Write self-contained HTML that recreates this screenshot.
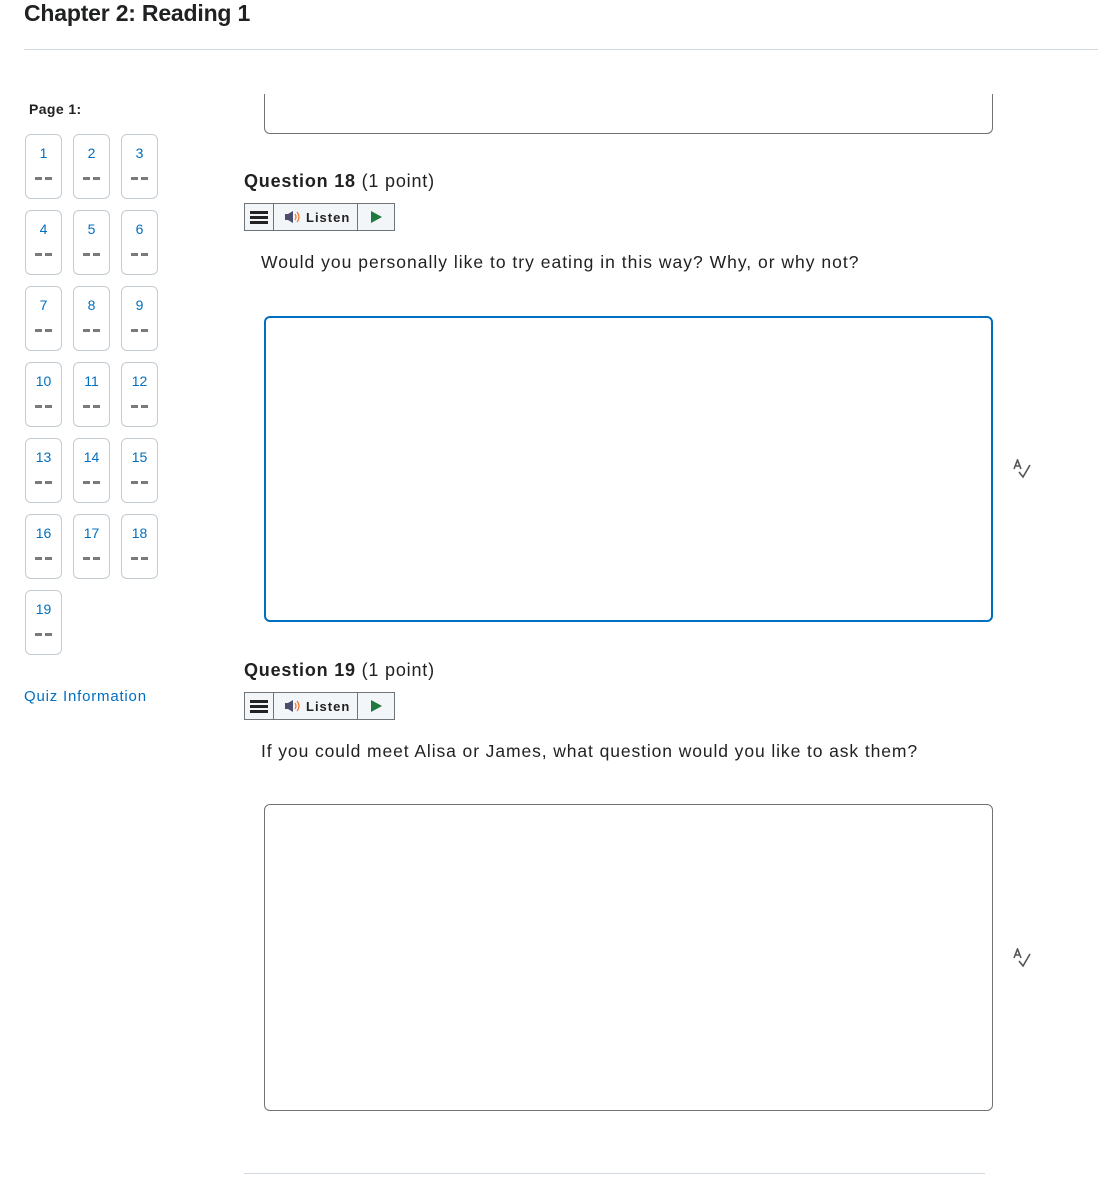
<!DOCTYPE html>
<html><head><meta charset="utf-8"><style>
*{margin:0;padding:0;box-sizing:border-box}
body{width:1098px;height:1179px;background:#fff;font-family:"Liberation Sans",sans-serif;color:#202122;position:relative;overflow:hidden}
.a{position:absolute}
h1{position:absolute;left:24px;top:0;font-size:23px;font-weight:bold;letter-spacing:-0.2px;color:#202122}
.hr{position:absolute;height:1px;background:#d3d9e3}
.b{position:absolute;width:37px;height:65px;border:1px solid #c4ccd2;border-radius:6px;text-align:center}
.b .n{position:absolute;top:10px;left:0;right:0;font-size:14px;color:#006fbf}
.b .d{position:absolute;top:42px;left:9px;width:17px;height:3px;border-left:7px solid #7a7a7a;border-right:7px solid #7a7a7a}
.q{position:absolute;left:244px;font-size:18px;color:#202122;letter-spacing:0.8px}
.q b{font-weight:bold}
.lb{position:absolute;left:244px;width:151px;height:28px;border:1px solid #6e7477;background:#f3f6f9;display:flex}
.lb .m{width:29px;border-right:1px solid #6e7477;display:flex;flex-direction:column;justify-content:center;align-items:center;gap:2px}
.lb .m i{display:block;width:18px;height:3px;background:#222}
.lb .l{width:84px;border-right:1px solid #6e7477;font-size:13px;font-weight:bold;letter-spacing:1px;display:flex;align-items:center;padding-left:10px;color:#222}
.lb .p{flex:1;display:flex;align-items:center;justify-content:center}
.t{position:absolute;left:261px;font-size:17.5px;color:#202122}
.ta{position:absolute;left:264px;width:729px;border:1px solid #6e7477;border-radius:6px}
</style></head><body>
<h1>Chapter 2: Reading 1</h1>
<div class="hr" style="left:24px;top:49px;width:1074px"></div>
<div class="a" style="left:29px;top:101px;font-size:14px;font-weight:bold;letter-spacing:0.4px">Page 1:</div>

<div class="b" style="left:25px;top:134px"><span class="n">1</span><span class="d"></span></div>
<div class="b" style="left:73px;top:134px"><span class="n">2</span><span class="d"></span></div>
<div class="b" style="left:121px;top:134px"><span class="n">3</span><span class="d"></span></div>
<div class="b" style="left:25px;top:210px"><span class="n">4</span><span class="d"></span></div>
<div class="b" style="left:73px;top:210px"><span class="n">5</span><span class="d"></span></div>
<div class="b" style="left:121px;top:210px"><span class="n">6</span><span class="d"></span></div>
<div class="b" style="left:25px;top:286px"><span class="n">7</span><span class="d"></span></div>
<div class="b" style="left:73px;top:286px"><span class="n">8</span><span class="d"></span></div>
<div class="b" style="left:121px;top:286px"><span class="n">9</span><span class="d"></span></div>
<div class="b" style="left:25px;top:362px"><span class="n">10</span><span class="d"></span></div>
<div class="b" style="left:73px;top:362px"><span class="n">11</span><span class="d"></span></div>
<div class="b" style="left:121px;top:362px"><span class="n">12</span><span class="d"></span></div>
<div class="b" style="left:25px;top:438px"><span class="n">13</span><span class="d"></span></div>
<div class="b" style="left:73px;top:438px"><span class="n">14</span><span class="d"></span></div>
<div class="b" style="left:121px;top:438px"><span class="n">15</span><span class="d"></span></div>
<div class="b" style="left:25px;top:514px"><span class="n">16</span><span class="d"></span></div>
<div class="b" style="left:73px;top:514px"><span class="n">17</span><span class="d"></span></div>
<div class="b" style="left:121px;top:514px"><span class="n">18</span><span class="d"></span></div>
<div class="b" style="left:25px;top:590px"><span class="n">19</span><span class="d"></span></div>

<div class="a" style="left:24px;top:688px;font-size:15px;color:#006fbf;letter-spacing:0.8px">Quiz Information</div>

<div class="ta" style="top:94px;height:40px;border-top:none;border-radius:0 0 6px 6px"></div>

<div class="q" style="top:171px"><b>Question 18</b> (1 point)</div>
<div class="lb" style="top:203px"><div class="m"><i></i><i></i><i></i></div><div class="l"><svg width="20" height="14" viewBox="0 0 20 14" style="margin-right:2px"><path d="M1 4h3l5-3v12l-5-3H1z" fill="#4a4d6e"/><path d="M11 4q2 3 0 6M13 2q4 5 0 10" stroke="#f07a3a" fill="none" stroke-width="1.3"/></svg>Listen</div><div class="p"><svg width="12" height="12"><path d="M1 0L12 6L1 12z" fill="#1e7a3e"/></svg></div></div>
<div class="t" style="top:252px;letter-spacing:1px">Would you personally like to try eating in this way? Why, or why not?</div>
<div class="ta" style="top:316px;height:306px;border:2px solid #006fbf"></div>
<svg class="a" style="left:1012px;top:459px" width="20" height="20" viewBox="0 0 20 20"><path d="M2 10L5.5 1L9 10M3.3 7h4.4M7 13l4 5l7-12" stroke="#555" stroke-width="1.6" fill="none"/></svg>

<div class="q" style="top:660px"><b>Question 19</b> (1 point)</div>
<div class="lb" style="top:692px"><div class="m"><i></i><i></i><i></i></div><div class="l"><svg width="20" height="14" viewBox="0 0 20 14" style="margin-right:2px"><path d="M1 4h3l5-3v12l-5-3H1z" fill="#4a4d6e"/><path d="M11 4q2 3 0 6M13 2q4 5 0 10" stroke="#f07a3a" fill="none" stroke-width="1.3"/></svg>Listen</div><div class="p"><svg width="12" height="12"><path d="M1 0L12 6L1 12z" fill="#1e7a3e"/></svg></div></div>
<div class="t" style="top:741px;letter-spacing:0.9px">If you could meet Alisa or James, what question would you like to ask them?</div>
<div class="ta" style="top:804px;height:307px"></div>
<svg class="a" style="left:1012px;top:948px" width="20" height="20" viewBox="0 0 20 20"><path d="M2 10L5.5 1L9 10M3.3 7h4.4M7 13l4 5l7-12" stroke="#555" stroke-width="1.6" fill="none"/></svg>

<div class="hr" style="left:244px;top:1173px;width:741px"></div>
</body></html>
